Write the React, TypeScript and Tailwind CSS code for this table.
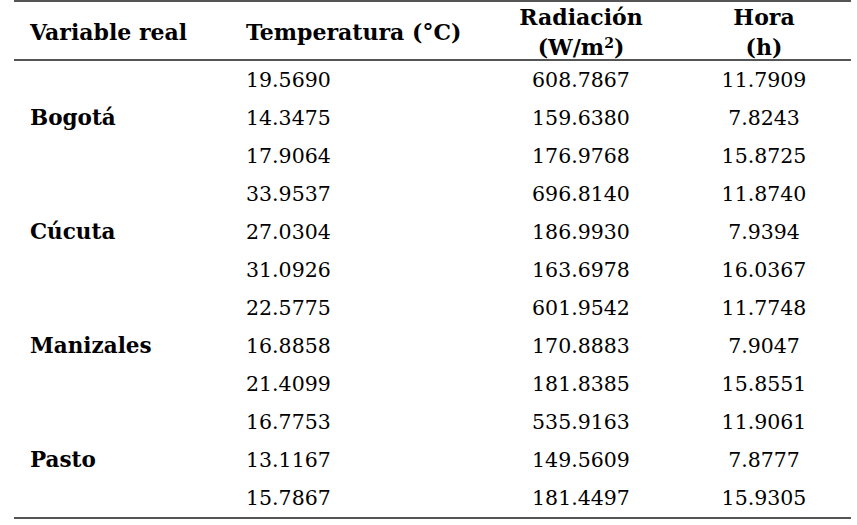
const rows = [
  { city: "", t: "19.5690", r: "608.7867", h: "11.7909" },
  { city: "Bogotá", t: "14.3475", r: "159.6380", h: "7.8243" },
  { city: "", t: "17.9064", r: "176.9768", h: "15.8725" },
  { city: "", t: "33.9537", r: "696.8140", h: "11.8740" },
  { city: "Cúcuta", t: "27.0304", r: "186.9930", h: "7.9394" },
  { city: "", t: "31.0926", r: "163.6978", h: "16.0367" },
  { city: "", t: "22.5775", r: "601.9542", h: "11.7748" },
  { city: "Manizales", t: "16.8858", r: "170.8883", h: "7.9047" },
  { city: "", t: "21.4099", r: "181.8385", h: "15.8551" },
  { city: "", t: "16.7753", r: "535.9163", h: "11.9061" },
  { city: "Pasto", t: "13.1167", r: "149.5609", h: "7.8777" },
  { city: "", t: "15.7867", r: "181.4497", h: "15.9305" },
]

const cols = "grid grid-cols-[217px_254px_192px_174px]"

export default function App() {
  return (
    <div className="min-h-screen bg-white pl-[14px] text-black" style={{ fontFamily: '"DejaVu Serif", serif' }}>
      <div className="w-[837px]">
        {/* header */}
        <div className={`${cols} h-[61px] border-y-2 border-[#555] text-[22px] font-bold leading-[30px]`}>
          <div className="flex items-center pl-4">Variable real</div>
          <div className="flex items-center pl-[15px]">Temperatura (°C)</div>
          <div className="flex flex-col items-center justify-center">
            <span>Radiación</span>
            <span>
              (W/m<sup className="text-[14px]">2</sup>)
            </span>
          </div>
          <div className="flex flex-col items-center justify-center">
            <span>Hora</span>
            <span>(h)</span>
          </div>
        </div>

        {/* body */}
        <div className="border-b-2 border-[#555] text-[20.5px]">
          {rows.map((row, i) => (
            <div key={i} className={`${cols} h-[38px] items-center`}>
              <div className="pl-4 text-[21.5px] font-bold">{row.city}</div>
              <div className="pl-[15px]">{row.t}</div>
              <div className="text-center">{row.r}</div>
              <div className="text-center">{row.h}</div>
            </div>
          ))}
        </div>
      </div>
    </div>
  )
}
